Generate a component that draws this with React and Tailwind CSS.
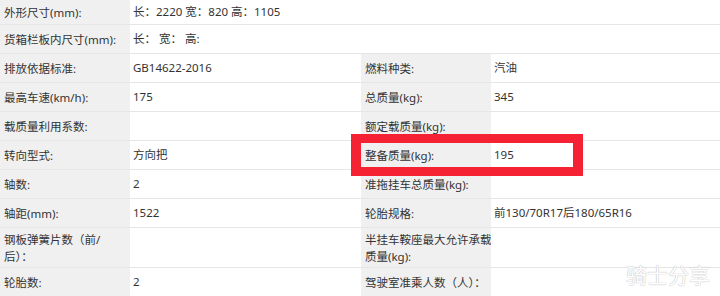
import React from 'react';

const font = { fontFamily: '"Noto Sans", "Noto Sans CJK SC", sans-serif' };

// 参数表格行
const rows = [
    { h: 'h-[25px]', cells: [['外形尺寸(mm):', '长：2220 宽：820 高：1105']] },
    { h: 'h-[29px]', cells: [['货箱栏板内尺寸(mm):', '长： 宽： 高:']] },
    { h: 'h-[29px]', cells: [['排放依据标准:', 'GB14622-2016'], ['燃料种类:', '汽油']] },
    { h: 'h-[29px]', cells: [['最高车速(km/h):', '175'], ['总质量(kg):', '345']] },
    { h: 'h-[29px]', cells: [['载质量利用系数:', ''], ['额定载质量(kg):', '']] },
    { h: 'h-[29px]', cells: [['转向型式:', '方向把'], ['整备质量(kg):', '195']] },
    { h: 'h-[29px]', cells: [['轴数:', '2'], ['准拖挂车总质量(kg):', '']] },
    { h: 'h-[29px]', cells: [['轴距(mm):', '1522'], ['轮胎规格:', '前130/70R17后180/65R16']] },
    { h: 'h-[40px]', cells: [[['钢板弹簧片数（前/', '后）：'], ''], [['半挂车鞍座最大允许承载', '质量(kg):'], '']] },
    { h: 'h-[29px]', cells: [['轮胎数:', '2'], ['驾驶室准乘人数（人）：', '']] },
];

const Label = ({ text }) => (
    <div className="bg-[#f0f0f0] pl-[4px] flex items-center leading-[17px] border-b border-[#e6e6e6]">
        {Array.isArray(text) ? (
            <div className="flex flex-col whitespace-nowrap">
                {text.map((t) => <span key={t}>{t}</span>)}
            </div>
        ) : (
            <span>{text}</span>
        )}
    </div>
);

const Value = ({ text, span }) => (
    <div className={`bg-white pl-[3px] flex items-center border-b border-[#e6e6e6] ${span ? 'col-span-3' : ''}`}>
        {text}
    </div>
);

export default function App() {
    return (
        <div className="relative w-[720px] h-[296px] overflow-hidden bg-white text-[11.5px] text-[#333]" style={font}>
            {rows.map((row, i) => (
                <div key={i} className={`grid grid-cols-[130px_231px_130px_229px] ${row.h}`}>
                    {row.cells.map(([l, v], j) => (
                        <React.Fragment key={j}>
                            <Label text={l} />
                            <Value text={v} span={row.cells.length === 1} />
                        </React.Fragment>
                    ))}
                </div>
            ))}

            {/* 红色标注框 */}
            <div className="absolute left-[351px] top-[134px] w-[232px] h-[42px] border-x-[10px] border-y-[9px] border-[#f42233]" />

            {/* 水印 */}
            <div
                className="absolute left-[626px] top-[260px] text-[21px] text-white opacity-90"
                style={{ textShadow: '0 0 1px #b8b8b8, 0 0 1px #b8b8b8' }}
            >
                骑士分享
            </div>
        </div>
    );
}
